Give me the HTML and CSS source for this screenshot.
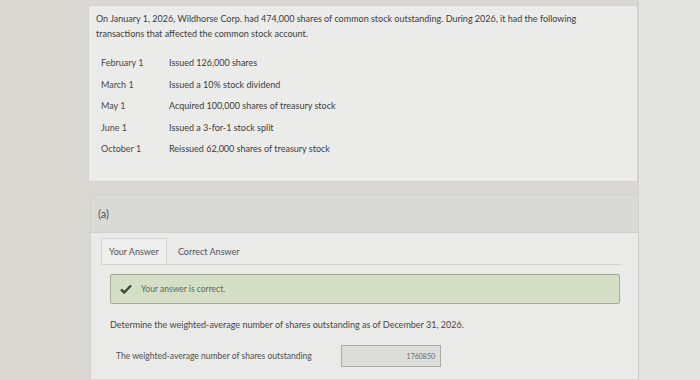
FILE: index.html
```html
<!DOCTYPE html>
<html>
<head>
  <title>Weighted-Average Shares</title>
  <link rel="stylesheet" href="styles.css">
</head>
<body>
  <div class="page">
    <div class="gutter"></div>

    <div class="main">
      <div class="question">
        <p class="intro">On January 1, 2026, Wildhorse Corp. had 474,000 shares of common stock outstanding. During 2026, it had the following transactions that affected the common stock account.</p>
        <table class="events">
          <tr><td class="date">February 1</td><td>Issued 126,000 shares</td></tr>
          <tr><td class="date">March 1</td><td>Issued a 10% stock dividend</td></tr>
          <tr><td class="date">May 1</td><td>Acquired 100,000 shares of treasury stock</td></tr>
          <tr><td class="date">June 1</td><td>Issued a 3-for-1 stock split</td></tr>
          <tr><td class="date">October 1</td><td>Reissued 62,000 shares of treasury stock</td></tr>
        </table>
      </div>

      <div class="part">
        <div class="part-head">(a)</div>
        <div class="part-body">
          <div class="tabs">
            <span class="tab active">Your Answer</span>
            <span class="tab">Correct Answer</span>
          </div>
          <div class="notice">
            <svg class="check" width="12" height="10" viewBox="0 0 12 10">
              <path d="M1 5.5 L4.2 8.5 L11 1.5" fill="none" stroke="#3f4a37" stroke-width="2.4"/>
            </svg>
            <span>Your answer is correct.</span>
          </div>
          <p class="prompt">Determine the weighted-average number of shares outstanding as of December 31, 2026.</p>
          <div class="answer-row">
            <span class="label">The weighted-average number of shares outstanding</span>
            <span class="field">1760850</span>
          </div>
        </div>
      </div>
    </div>

    <div class="side"></div>
  </div>
</body>
</html>
```

FILE: styles.css
```css
body {
  margin: 0;
  font-family: Lato, "Open Sans", sans-serif;
  background: #d9d8d2;
  color: #3d3d3b;
}
.page {
  display: flex;
  height: 380px;
  overflow: hidden;
}
.gutter { width: 88px; flex: none; }
.main {
  width: 550px;
  flex: none;
  padding-top: 5px;
}
.side {
  flex: 1;
  background: #e4e5e3;
  border-left: 1px solid #cfd1cf;
}

.question {
  background: #ebebe9;
  border: 1px solid #d2d2cf;
  border-radius: 2px;
  height: 177px;
  padding: 5px 7px 0;
  box-sizing: border-box;
}
.intro {
  margin: 0;
  max-width: 488px;
  font-size: 9px;
  line-height: 15px;
}
.events {
  border-collapse: collapse;
  margin: 11px 0 0 5px;
  font-size: 9px;
}
.events td {
  height: 21.5px;
  padding: 0;
}
.events .date { width: 68px; color: #4a4a48; }

.part {
  margin-top: 12px;
  margin-left: 2px;
  border-left: 1px solid #d0d0cc;
}
.part-head {
  background: #d9dad6;
  height: 37px;
  line-height: 37px;
  padding-left: 7px;
  font-size: 11px;
  color: #50504e;
  border-top: 1px solid #d2d3cf;
  border-bottom: 1px solid #d0d1cd;
}
.part-body {
  background: #eaeae8;
  height: 146px;
  padding: 5px 0 0 10px;
  box-sizing: border-box;
}
.tabs {
  display: flex;
  align-items: flex-end;
  height: 26px;
  width: 520px;
  border-bottom: 1px solid #d4d4d1;
}
.tab {
  font-size: 9px;
  padding: 0 7px;
  line-height: 25px;
  color: #4c5468;
}
.tab.active {
  color: #555553;
  background: #eeeeec;
  border: 1px solid #d4d4d1;
  border-bottom: none;
  padding: 0 7px;
  margin-right: 4px;
  line-height: 25px;
}
.notice {
  display: flex;
  align-items: center;
  gap: 9px;
  margin: 9px 0 0 9px;
  width: 510px;
  height: 30px;
  box-sizing: border-box;
  padding-left: 9px;
  background: #d5dfc6;
  border: 1px solid #a2ad95;
  border-radius: 2px;
  font-size: 8.5px;
  color: #5d6a52;
}
.prompt {
  margin: 15px 0 0 9px;
  font-size: 9px;
  color: #474745;
}
.answer-row {
  display: flex;
  align-items: center;
  margin: 15px 0 0 15px;
}
.label {
  width: 225px;
  font-size: 8.5px;
  color: #50504e;
}
.field {
  width: 100px;
  height: 22px;
  box-sizing: border-box;
  border: 1px solid #a9aaa6;
  background: #dcdcd9;
  text-align: right;
  padding-right: 5px;
  line-height: 20px;
  font-size: 7px;
  color: #6a6a68;
}
```
